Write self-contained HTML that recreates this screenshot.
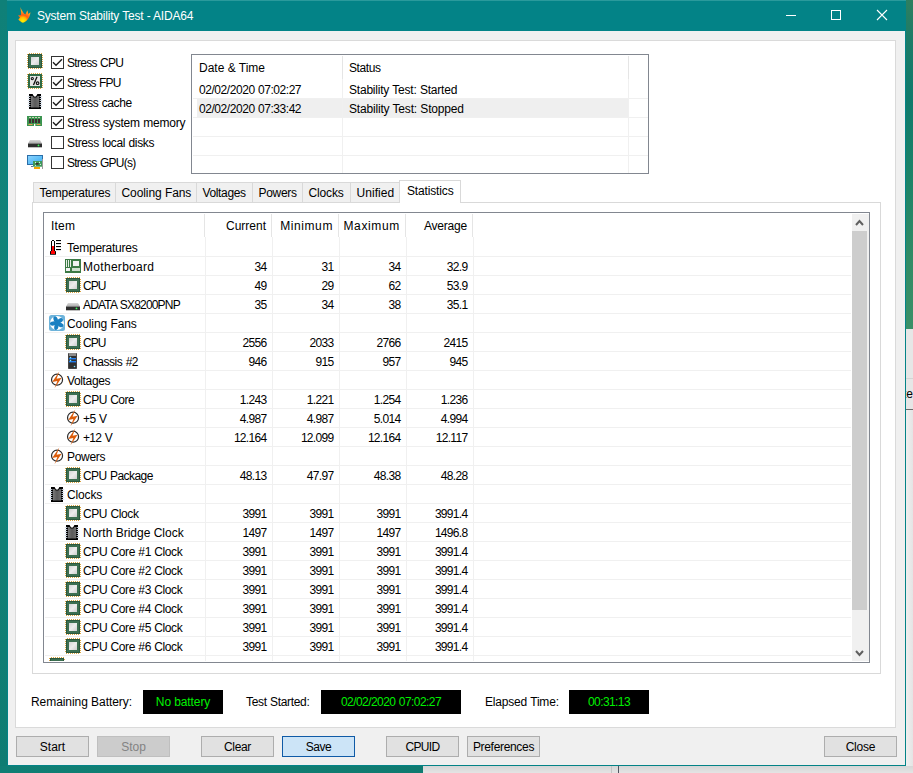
<!DOCTYPE html><html><head><meta charset="utf-8"><style>
*{margin:0;padding:0;box-sizing:border-box}
html,body{width:913px;height:773px;overflow:hidden}
body{position:relative;font-family:"Liberation Sans", sans-serif;font-size:12px;color:#000;
background:linear-gradient(180deg,#2f8c74 0%,#2a8a70 40%,#1f8470 100%)}
.a{position:absolute}
.ic{position:absolute;overflow:visible}
.t{position:absolute;white-space:nowrap;line-height:14px;letter-spacing:-0.3px}
.r{position:absolute;white-space:nowrap;line-height:14px;letter-spacing:-0.3px;text-align:right}
.cb{position:absolute;width:13px;height:13px;border:1px solid #333;background:#fff}
.btn{position:absolute;height:21px;width:73px;background:#e1e1e1;border:1px solid #adadad;text-align:center;line-height:21px;letter-spacing:-0.3px}
.blk{position:absolute;background:#000;color:#00f000;text-align:center;height:24px;line-height:24px;letter-spacing:-0.3px}
</style></head><body>
<svg width="0" height="0" style="position:absolute"><defs>
<linearGradient id="gcpu" x1="0" y1="0" x2="1" y2="1"><stop offset="0" stop-color="#d4d4d4"/><stop offset="0.5" stop-color="#ececec"/><stop offset="1" stop-color="#cfcfcf"/></linearGradient>
<linearGradient id="gchip" x1="0" y1="0" x2="1" y2="0"><stop offset="0" stop-color="#7a7a7a"/><stop offset="0.5" stop-color="#5a5a5a"/><stop offset="1" stop-color="#6e6e6e"/></linearGradient>
</defs></svg>

<div class="a" style="left:0;top:0;width:7px;height:773px;background:linear-gradient(180deg,#0f8078 0%,#128479 40%,#0e7c72 100%)"></div>
<div class="a" style="left:0;top:766px;width:423px;height:7px;background:linear-gradient(90deg,#0f7e74,#127f72 50%,#0f7a70)"></div>
<div class="a" style="left:906px;top:0;width:7px;height:329px;background:linear-gradient(180deg,#2e7f60 0%,#1c7c68 12%,#0f7a6c 30%,#1d8468 55%,#328c66 80%,#3a9068 100%)"></div>
<div class="a" style="left:906px;top:329px;width:7px;height:444px;background:linear-gradient(90deg,#f0f0f0,#e4e4e4)"></div>
<div class="a" style="left:906px;top:329px;width:7px;height:80px;background:#e6e6e6"></div>
<div class="a" style="left:906px;top:378px;width:7px;height:1px;background:#d4d4d4"></div>
<div class="a" style="left:906px;top:409px;width:7px;height:1px;background:#6a6a6a"></div>
<div class="a" style="left:906px;top:380px;width:7px;height:25px;overflow:hidden"><div class="t" style="left:-3px;top:7px;letter-spacing:0">te</div></div>
<div class="a" style="left:423px;top:766px;width:490px;height:7px;background:linear-gradient(180deg,#d6d6d6,#e4e4e4)"></div>
<div class="a" style="left:611px;top:766px;width:1px;height:7px;background:#c4c4c4"></div>
<div class="a" style="left:618px;top:766px;width:1px;height:7px;background:#505560"></div>
<div class="a" style="left:7px;top:0;width:899px;height:766px;background:#038387"></div>
<div class="a" style="left:7px;top:0;width:899px;height:1px;background:#2a9a9c"></div>
<div class="a" style="left:8px;top:31px;width:897px;height:734px;background:#f0f0f0"></div>
<svg class="ic" style="left:15px;top:4px" width="20" height="22" viewBox="0 0 20 22"><defs><radialGradient id="gfl" cx="7.8" cy="17" r="10" gradientUnits="userSpaceOnUse"><stop offset="0" stop-color="#fff200"/><stop offset="0.35" stop-color="#ffc000"/><stop offset="0.6" stop-color="#ff5a14"/><stop offset="1" stop-color="#ffa020"/></radialGradient></defs><path d="M5.3 3 C6 5 8 8 9 9.5 L10.3 10.5 L12.4 6.2 L13.3 10 L15.5 8.2 C15 11 14.5 13 13 15 C11 17.5 9 18.8 7.8 18.8 C6 18 4.5 16.5 3.3 15.4 L5 13.6 L3 11.4 L6 11 C6.5 8 5.5 5 5.3 3 Z" fill="url(#gfl)"/></svg>
<div class="t" style="left:37px;top:9px;letter-spacing:-0.220px;word-spacing:0.220px;color:#fff;font-size:12px">System Stability Test - AIDA64</div>
<div class="a" style="left:786px;top:15px;width:10px;height:1px;background:#fff"></div>
<div class="a" style="left:831px;top:10px;width:10px;height:10px;border:1px solid #fff"></div>
<svg class="ic" style="left:876px;top:9px" width="12" height="12" viewBox="0 0 12 12"><path d="M1 1 L11 11 M11 1 L1 11" stroke="#fff" stroke-width="1.1"/></svg>
<div class="a" style="left:15px;top:40px;width:881px;height:688px;background:#fff;border:1px solid #dadada"></div>
<svg class="ic" style="left:27px;top:53px" width="16" height="16" viewBox="0 0 16 16"><g fill="#d9a441"><rect x="2" y="0" width="1" height="1"/><rect x="1" y="15" width="1" height="1"/><rect x="0" y="1" width="1" height="1"/><rect x="15" y="2" width="1" height="1"/><rect x="4" y="0" width="1" height="1"/><rect x="3" y="15" width="1" height="1"/><rect x="0" y="3" width="1" height="1"/><rect x="15" y="4" width="1" height="1"/><rect x="6" y="0" width="1" height="1"/><rect x="5" y="15" width="1" height="1"/><rect x="0" y="5" width="1" height="1"/><rect x="15" y="6" width="1" height="1"/><rect x="8" y="0" width="1" height="1"/><rect x="7" y="15" width="1" height="1"/><rect x="0" y="7" width="1" height="1"/><rect x="15" y="8" width="1" height="1"/><rect x="10" y="0" width="1" height="1"/><rect x="9" y="15" width="1" height="1"/><rect x="0" y="9" width="1" height="1"/><rect x="15" y="10" width="1" height="1"/><rect x="12" y="0" width="1" height="1"/><rect x="11" y="15" width="1" height="1"/><rect x="0" y="11" width="1" height="1"/><rect x="15" y="12" width="1" height="1"/><rect x="14" y="0" width="1" height="1"/><rect x="13" y="15" width="1" height="1"/><rect x="0" y="13" width="1" height="1"/><rect x="15" y="14" width="1" height="1"/></g><rect x="1" y="1" width="14" height="14" fill="#3c6f51"/><rect x="1.5" y="1.5" width="13" height="13" fill="none" stroke="#2a573d" stroke-width="1"/><rect x="4" y="4" width="8" height="8" fill="url(#gcpu)"/></svg>
<div class="cb" style="left:51px;top:56px"></div>
<svg class="ic" style="left:51px;top:56px" width="13" height="13" viewBox="0 0 13 13"><path d="M2 6.3 L5 9.2 L11 3.2" fill="none" stroke="#1a1a1a" stroke-width="1.35"/></svg>
<div class="t" style="left:67px;top:56px;letter-spacing:-0.709px;word-spacing:0.709px;">Stress CPU</div>
<svg class="ic" style="left:27px;top:73px" width="16" height="16" viewBox="0 0 16 16"><g fill="#d9a441"><rect x="2" y="0" width="1" height="1"/><rect x="1" y="15" width="1" height="1"/><rect x="0" y="1" width="1" height="1"/><rect x="15" y="2" width="1" height="1"/><rect x="4" y="0" width="1" height="1"/><rect x="3" y="15" width="1" height="1"/><rect x="0" y="3" width="1" height="1"/><rect x="15" y="4" width="1" height="1"/><rect x="6" y="0" width="1" height="1"/><rect x="5" y="15" width="1" height="1"/><rect x="0" y="5" width="1" height="1"/><rect x="15" y="6" width="1" height="1"/><rect x="8" y="0" width="1" height="1"/><rect x="7" y="15" width="1" height="1"/><rect x="0" y="7" width="1" height="1"/><rect x="15" y="8" width="1" height="1"/><rect x="10" y="0" width="1" height="1"/><rect x="9" y="15" width="1" height="1"/><rect x="0" y="9" width="1" height="1"/><rect x="15" y="10" width="1" height="1"/><rect x="12" y="0" width="1" height="1"/><rect x="11" y="15" width="1" height="1"/><rect x="0" y="11" width="1" height="1"/><rect x="15" y="12" width="1" height="1"/><rect x="14" y="0" width="1" height="1"/><rect x="13" y="15" width="1" height="1"/><rect x="0" y="13" width="1" height="1"/><rect x="15" y="14" width="1" height="1"/></g><rect x="1" y="1" width="14" height="14" fill="#2f6a45"/><rect x="3" y="3" width="10" height="10" fill="#e6e6e6"/><circle cx="5.3" cy="5.6" r="1.1" fill="none" stroke="#111" stroke-width="1.1"/><circle cx="10.6" cy="10.2" r="1.3" fill="none" stroke="#111" stroke-width="1.1"/><path d="M10 3.8 L6.5 12" stroke="#111" stroke-width="1.3"/></svg>
<div class="cb" style="left:51px;top:76px"></div>
<svg class="ic" style="left:51px;top:76px" width="13" height="13" viewBox="0 0 13 13"><path d="M2 6.3 L5 9.2 L11 3.2" fill="none" stroke="#1a1a1a" stroke-width="1.35"/></svg>
<div class="t" style="left:67px;top:76px;letter-spacing:-0.878px;word-spacing:0.878px;">Stress FPU</div>
<svg class="ic" style="left:28px;top:93px" width="14" height="17" viewBox="0 0 14 17"><path d="M1 1 H4.6 L6 3.4 H8 L9.4 1 H13 V16 H1 Z" fill="#000"/><path d="M3 3 H4.6 L5.6 4.6 H8.4 L9.4 3 H11 V14.5 H3 Z" fill="url(#gchip)"/><g fill="#d2dce8"><rect x="-0.2" y="3.0" width="2.6" height="0.9"/><rect x="11.6" y="3.0" width="2.6" height="0.9"/><rect x="-0.2" y="5.0" width="2.6" height="0.9"/><rect x="11.6" y="5.0" width="2.6" height="0.9"/><rect x="-0.2" y="7.0" width="2.6" height="0.9"/><rect x="11.6" y="7.0" width="2.6" height="0.9"/><rect x="-0.2" y="9.0" width="2.6" height="0.9"/><rect x="11.6" y="9.0" width="2.6" height="0.9"/><rect x="-0.2" y="11.0" width="2.6" height="0.9"/><rect x="11.6" y="11.0" width="2.6" height="0.9"/><rect x="-0.2" y="13.0" width="2.6" height="0.9"/><rect x="11.6" y="13.0" width="2.6" height="0.9"/></g></svg>
<div class="cb" style="left:51px;top:96px"></div>
<svg class="ic" style="left:51px;top:96px" width="13" height="13" viewBox="0 0 13 13"><path d="M2 6.3 L5 9.2 L11 3.2" fill="none" stroke="#1a1a1a" stroke-width="1.35"/></svg>
<div class="t" style="left:67px;top:96px;letter-spacing:-0.429px;word-spacing:0.429px;">Stress cache</div>
<svg class="ic" style="left:25px;top:111px" width="20" height="20" viewBox="0 0 20 20"><rect x="2" y="5" width="15" height="10" fill="#3b9450"/><rect x="4" y="8" width="2" height="4" fill="#3e2c30"/><rect x="4" y="6" width="2" height="1" fill="#c9d6b4"/><rect x="7" y="8" width="2" height="4" fill="#3e2c30"/><rect x="7" y="6" width="2" height="1" fill="#c9d6b4"/><rect x="10" y="8" width="2" height="4" fill="#3e2c30"/><rect x="10" y="6" width="2" height="1" fill="#c9d6b4"/><rect x="13" y="8" width="2" height="4" fill="#3e2c30"/><rect x="13" y="6" width="2" height="1" fill="#c9d6b4"/><rect x="3.5" y="13" width="4" height="1" fill="#e8a050"/><rect x="11.5" y="13" width="4" height="1" fill="#e8a050"/><rect x="9" y="12.8" width="1.3" height="2.2" fill="#fff"/></svg>
<div class="cb" style="left:51px;top:116px"></div>
<svg class="ic" style="left:51px;top:116px" width="13" height="13" viewBox="0 0 13 13"><path d="M2 6.3 L5 9.2 L11 3.2" fill="none" stroke="#1a1a1a" stroke-width="1.35"/></svg>
<div class="t" style="left:67px;top:116px;letter-spacing:-0.212px;word-spacing:0.212px;">Stress system memory</div>
<svg class="ic" style="left:28px;top:140px" width="14" height="8" viewBox="0 0 14 8"><defs><linearGradient id="gdk28140" x1="0" y1="0" x2="0" y2="1"><stop offset="0" stop-color="#d8d8d8"/><stop offset="1" stop-color="#a8a8a8"/></linearGradient></defs><path d="M2 0 H12 L14 3.5 H0 Z" fill="url(#gdk28140)"/><rect x="0" y="3.5" width="14" height="3.8" fill="#2e2e2e"/><circle cx="10.5" cy="5.4" r="0.9" fill="#3cff5a"/></svg>
<div class="cb" style="left:51px;top:136px"></div>
<div class="t" style="left:67px;top:136px;letter-spacing:-0.351px;word-spacing:0.351px;">Stress local disks</div>
<svg class="ic" style="left:25px;top:151px" width="20" height="20" viewBox="0 0 20 20"><defs><linearGradient id="ggpu" x1="0" y1="0" x2="1" y2="1"><stop offset="0" stop-color="#8ad2ff"/><stop offset="1" stop-color="#38aef0"/></linearGradient></defs><rect x="2" y="4" width="16" height="10" fill="#2c6ea8"/><rect x="3" y="5" width="14" height="8" fill="url(#ggpu)"/><rect x="8" y="10" width="9" height="5.7" fill="#3e9a5a"/><rect x="11" y="12" width="2.6" height="1.6" fill="#3a2a2a"/><circle cx="10.5" cy="11.4" r="0.55" fill="#e8f0e8"/><circle cx="14.5" cy="11.4" r="0.55" fill="#e8f0e8"/><circle cx="15.4" cy="13.4" r="0.55" fill="#e8f0e8"/><circle cx="10.5" cy="14.5" r="0.55" fill="#e8f0e8"/><rect x="9" y="16" width="6" height="2" fill="#f5a800"/><rect x="17" y="8" width="1" height="10" fill="#9a9a9a"/><rect x="6" y="15.2" width="2" height="0.8" fill="#3a5a8a"/></svg>
<div class="cb" style="left:51px;top:156px"></div>
<div class="t" style="left:67px;top:156px;letter-spacing:-0.742px;word-spacing:0.742px;">Stress GPU(s)</div>
<div class="a" style="left:191px;top:54px;width:458px;height:120px;border:1px solid #828790;background:#fff"></div>
<div class="a" style="left:342px;top:56px;width:1px;height:23px;background:#e5e5e5"></div>
<div class="a" style="left:628px;top:56px;width:1px;height:23px;background:#e5e5e5"></div>
<div class="t" style="left:199px;top:61px;letter-spacing:0px;">Date &amp; Time</div>
<div class="t" style="left:349px;top:61px;letter-spacing:-0.38px;">Status</div>
<div class="a" style="left:193px;top:98px;width:455px;height:1px;background:#f0f0f0"></div>
<div class="a" style="left:193px;top:117px;width:455px;height:1px;background:#f0f0f0"></div>
<div class="a" style="left:193px;top:136px;width:455px;height:1px;background:#f0f0f0"></div>
<div class="a" style="left:193px;top:155px;width:455px;height:1px;background:#f0f0f0"></div>
<div class="a" style="left:197px;top:99px;width:431px;height:18px;background:#efefef"></div>
<div class="a" style="left:342px;top:79px;width:1px;height:94px;background:#f0f0f0"></div>
<div class="a" style="left:628px;top:79px;width:1px;height:94px;background:#f0f0f0"></div>
<div class="t" style="left:199px;top:83px;letter-spacing:-0.445px;word-spacing:0.445px;">02/02/2020 07:02:27</div>
<div class="t" style="left:349px;top:83px;letter-spacing:-0.209px;word-spacing:0.209px;">Stability Test: Started</div>
<div class="t" style="left:199px;top:102px;letter-spacing:-0.445px;word-spacing:0.445px;">02/02/2020 07:33:42</div>
<div class="t" style="left:349px;top:102px;letter-spacing:-0.176px;word-spacing:0.176px;">Stability Test: Stopped</div>
<div class="a" style="left:32px;top:202px;width:849px;height:472px;border:1px solid #d9d9d9;background:#fff"></div>
<div class="a" style="left:33px;top:182px;width:83px;height:21px;background:#f0f0f0;border:1px solid #d9d9d9"></div>
<div class="a" style="left:115px;top:182px;width:82px;height:21px;background:#f0f0f0;border:1px solid #d9d9d9"></div>
<div class="a" style="left:196px;top:182px;width:57px;height:21px;background:#f0f0f0;border:1px solid #d9d9d9"></div>
<div class="a" style="left:252px;top:182px;width:51px;height:21px;background:#f0f0f0;border:1px solid #d9d9d9"></div>
<div class="a" style="left:302px;top:182px;width:49px;height:21px;background:#f0f0f0;border:1px solid #d9d9d9"></div>
<div class="a" style="left:350px;top:182px;width:50px;height:21px;background:#f0f0f0;border:1px solid #d9d9d9"></div>
<div class="t" style="left:39.5px;top:186px;letter-spacing:-0.22px;">Temperatures</div>
<div class="t" style="left:121.5px;top:186px;letter-spacing:-0.088px;word-spacing:0.088px;">Cooling Fans</div>
<div class="t" style="left:202.5px;top:186px;letter-spacing:-0.36px;">Voltages</div>
<div class="t" style="left:258.5px;top:186px;letter-spacing:-0.32px;">Powers</div>
<div class="t" style="left:308.5px;top:186px;letter-spacing:-0.13px;">Clocks</div>
<div class="t" style="left:356.5px;top:186px;letter-spacing:0.05px;">Unified</div>
<div class="a" style="left:399px;top:180px;width:62px;height:23px;background:#fff;border:1px solid #d9d9d9;border-bottom:none"></div>
<div class="t" style="left:407px;top:184px;letter-spacing:-0.15px;">Statistics</div>
<div class="a" style="left:43px;top:212px;width:827px;height:451px;border:1px solid #828790;background:#fff"></div>
<div class="a" style="left:204px;top:214px;width:1px;height:23px;background:#e5e5e5"></div>
<div class="a" style="left:271px;top:214px;width:1px;height:23px;background:#e5e5e5"></div>
<div class="a" style="left:338px;top:214px;width:1px;height:23px;background:#e5e5e5"></div>
<div class="a" style="left:405px;top:214px;width:1px;height:23px;background:#e5e5e5"></div>
<div class="a" style="left:472px;top:214px;width:1px;height:23px;background:#e5e5e5"></div>
<div class="t" style="left:51px;top:219px;letter-spacing:0.2px;">Item</div>
<div class="r" style="left:204px;top:219px;width:62px;letter-spacing:0px">Current</div>
<div class="r" style="left:271px;top:219px;width:62px;letter-spacing:0.6px">Minimum</div>
<div class="r" style="left:338px;top:219px;width:62px;letter-spacing:0.65px">Maximum</div>
<div class="r" style="left:405px;top:219px;width:62px;letter-spacing:-0.2px">Average</div>
<div class="a" style="left:45px;top:256px;width:806px;height:1px;background:#f0f0f0"></div>
<div class="a" style="left:45px;top:275px;width:806px;height:1px;background:#f0f0f0"></div>
<div class="a" style="left:45px;top:294px;width:806px;height:1px;background:#f0f0f0"></div>
<div class="a" style="left:45px;top:313px;width:806px;height:1px;background:#f0f0f0"></div>
<div class="a" style="left:45px;top:332px;width:806px;height:1px;background:#f0f0f0"></div>
<div class="a" style="left:45px;top:351px;width:806px;height:1px;background:#f0f0f0"></div>
<div class="a" style="left:45px;top:370px;width:806px;height:1px;background:#f0f0f0"></div>
<div class="a" style="left:45px;top:389px;width:806px;height:1px;background:#f0f0f0"></div>
<div class="a" style="left:45px;top:408px;width:806px;height:1px;background:#f0f0f0"></div>
<div class="a" style="left:45px;top:427px;width:806px;height:1px;background:#f0f0f0"></div>
<div class="a" style="left:45px;top:446px;width:806px;height:1px;background:#f0f0f0"></div>
<div class="a" style="left:45px;top:465px;width:806px;height:1px;background:#f0f0f0"></div>
<div class="a" style="left:45px;top:484px;width:806px;height:1px;background:#f0f0f0"></div>
<div class="a" style="left:45px;top:503px;width:806px;height:1px;background:#f0f0f0"></div>
<div class="a" style="left:45px;top:522px;width:806px;height:1px;background:#f0f0f0"></div>
<div class="a" style="left:45px;top:541px;width:806px;height:1px;background:#f0f0f0"></div>
<div class="a" style="left:45px;top:560px;width:806px;height:1px;background:#f0f0f0"></div>
<div class="a" style="left:45px;top:579px;width:806px;height:1px;background:#f0f0f0"></div>
<div class="a" style="left:45px;top:598px;width:806px;height:1px;background:#f0f0f0"></div>
<div class="a" style="left:45px;top:617px;width:806px;height:1px;background:#f0f0f0"></div>
<div class="a" style="left:45px;top:636px;width:806px;height:1px;background:#f0f0f0"></div>
<div class="a" style="left:45px;top:655px;width:806px;height:1px;background:#f0f0f0"></div>
<div class="a" style="left:205px;top:237px;width:1px;height:424px;background:#f0f0f0"></div>
<div class="a" style="left:272px;top:237px;width:1px;height:424px;background:#f0f0f0"></div>
<div class="a" style="left:339px;top:237px;width:1px;height:424px;background:#f0f0f0"></div>
<div class="a" style="left:406px;top:237px;width:1px;height:424px;background:#f0f0f0"></div>
<div class="a" style="left:473px;top:237px;width:1px;height:424px;background:#f0f0f0"></div>
<svg class="ic" style="left:47px;top:237px" width="18" height="20" viewBox="0 0 18 20"><rect x="4" y="4" width="4" height="11" fill="#000"/><rect x="5" y="3" width="2" height="1" fill="#000"/><rect x="5" y="4" width="2" height="5" fill="#fff"/><rect x="5" y="9" width="2" height="6" fill="#f00"/><rect x="3" y="14" width="6" height="3.8" rx="0.6" fill="#000"/><rect x="4" y="14" width="4" height="3" fill="#f00"/><rect x="9" y="3" width="5" height="1.1" fill="#000"/><rect x="9" y="6" width="5" height="1.1" fill="#000"/><rect x="9" y="9" width="5" height="1.1" fill="#000"/><rect x="9" y="12" width="5" height="1.1" fill="#000"/></svg>
<div class="t" style="left:67px;top:241px;letter-spacing:-0.24px;">Temperatures</div>
<svg class="ic" style="left:65px;top:259px" width="16" height="14" viewBox="0 0 16 14"><rect x="0" y="0" width="16" height="14" fill="#3c7a45"/><rect x="1" y="1" width="1" height="7" fill="#e8efe8"/><rect x="3" y="1" width="1" height="7" fill="#e8efe8"/><rect x="5" y="1" width="1" height="7" fill="#e8efe8"/><rect x="8" y="2" width="6" height="5" fill="#f2f2f2"/><rect x="1" y="9" width="4" height="3" fill="#f2f2f2"/><rect x="7" y="9" width="8" height="3" fill="#cfe0cf"/></svg>
<div class="t" style="left:83px;top:260px;letter-spacing:0.3px;">Motherboard</div>
<div class="r" style="left:204px;top:260px;width:62.4px;letter-spacing:-0.7px">34</div>
<div class="r" style="left:271px;top:260px;width:62.4px;letter-spacing:-0.7px">31</div>
<div class="r" style="left:338px;top:260px;width:62.4px;letter-spacing:-0.7px">34</div>
<div class="r" style="left:405px;top:260px;width:62.4px;letter-spacing:-0.7px">32.9</div>
<svg class="ic" style="left:65px;top:277px" width="16" height="16" viewBox="0 0 16 16"><g fill="#d9a441"><rect x="2" y="0" width="1" height="1"/><rect x="1" y="15" width="1" height="1"/><rect x="0" y="1" width="1" height="1"/><rect x="15" y="2" width="1" height="1"/><rect x="4" y="0" width="1" height="1"/><rect x="3" y="15" width="1" height="1"/><rect x="0" y="3" width="1" height="1"/><rect x="15" y="4" width="1" height="1"/><rect x="6" y="0" width="1" height="1"/><rect x="5" y="15" width="1" height="1"/><rect x="0" y="5" width="1" height="1"/><rect x="15" y="6" width="1" height="1"/><rect x="8" y="0" width="1" height="1"/><rect x="7" y="15" width="1" height="1"/><rect x="0" y="7" width="1" height="1"/><rect x="15" y="8" width="1" height="1"/><rect x="10" y="0" width="1" height="1"/><rect x="9" y="15" width="1" height="1"/><rect x="0" y="9" width="1" height="1"/><rect x="15" y="10" width="1" height="1"/><rect x="12" y="0" width="1" height="1"/><rect x="11" y="15" width="1" height="1"/><rect x="0" y="11" width="1" height="1"/><rect x="15" y="12" width="1" height="1"/><rect x="14" y="0" width="1" height="1"/><rect x="13" y="15" width="1" height="1"/><rect x="0" y="13" width="1" height="1"/><rect x="15" y="14" width="1" height="1"/></g><rect x="1" y="1" width="14" height="14" fill="#3c6f51"/><rect x="1.5" y="1.5" width="13" height="13" fill="none" stroke="#2a573d" stroke-width="1"/><rect x="4" y="4" width="8" height="8" fill="url(#gcpu)"/></svg>
<div class="t" style="left:83px;top:279px;letter-spacing:-0.9px;">CPU</div>
<div class="r" style="left:204px;top:279px;width:62.4px;letter-spacing:-0.7px">49</div>
<div class="r" style="left:271px;top:279px;width:62.4px;letter-spacing:-0.7px">29</div>
<div class="r" style="left:338px;top:279px;width:62.4px;letter-spacing:-0.7px">62</div>
<div class="r" style="left:405px;top:279px;width:62.4px;letter-spacing:-0.7px">53.9</div>
<svg class="ic" style="left:66px;top:303px" width="14" height="8" viewBox="0 0 14 8"><defs><linearGradient id="gdk66303" x1="0" y1="0" x2="0" y2="1"><stop offset="0" stop-color="#d8d8d8"/><stop offset="1" stop-color="#a8a8a8"/></linearGradient></defs><path d="M2 0 H12 L14 3.5 H0 Z" fill="url(#gdk66303)"/><rect x="0" y="3.5" width="14" height="3.8" fill="#2e2e2e"/><circle cx="10.5" cy="5.4" r="0.9" fill="#3cff5a"/></svg>
<div class="t" style="left:83px;top:298px;letter-spacing:-0.818px;word-spacing:0.818px;">ADATA SX8200PNP</div>
<div class="r" style="left:204px;top:298px;width:62.4px;letter-spacing:-0.7px">35</div>
<div class="r" style="left:271px;top:298px;width:62.4px;letter-spacing:-0.7px">34</div>
<div class="r" style="left:338px;top:298px;width:62.4px;letter-spacing:-0.7px">38</div>
<div class="r" style="left:405px;top:298px;width:62.4px;letter-spacing:-0.7px">35.1</div>
<svg class="ic" style="left:49px;top:315px" width="16" height="16" viewBox="0 0 16 16"><rect x="0" y="0" width="16" height="16" rx="2.5" fill="#6db3da"/><circle cx="8" cy="8" r="7" fill="#ffffff"/><g fill="#1a80c2"><ellipse cx="8" cy="4.2" rx="2.1" ry="3.3" transform="rotate(-20 8 8)"/><ellipse cx="8" cy="4.2" rx="2.1" ry="3.3" transform="rotate(52 8 8)"/><ellipse cx="8" cy="4.2" rx="2.1" ry="3.3" transform="rotate(118 8 8)"/><ellipse cx="8" cy="4.2" rx="2.1" ry="3.3" transform="rotate(190 8 8)"/><ellipse cx="8" cy="4.2" rx="2.1" ry="3.3" transform="rotate(262 8 8)"/></g><circle cx="8" cy="8" r="2.4" fill="#1a80c2"/></svg>
<div class="t" style="left:67px;top:317px;letter-spacing:-0.088px;word-spacing:0.088px;">Cooling Fans</div>
<svg class="ic" style="left:65px;top:334px" width="16" height="16" viewBox="0 0 16 16"><g fill="#d9a441"><rect x="2" y="0" width="1" height="1"/><rect x="1" y="15" width="1" height="1"/><rect x="0" y="1" width="1" height="1"/><rect x="15" y="2" width="1" height="1"/><rect x="4" y="0" width="1" height="1"/><rect x="3" y="15" width="1" height="1"/><rect x="0" y="3" width="1" height="1"/><rect x="15" y="4" width="1" height="1"/><rect x="6" y="0" width="1" height="1"/><rect x="5" y="15" width="1" height="1"/><rect x="0" y="5" width="1" height="1"/><rect x="15" y="6" width="1" height="1"/><rect x="8" y="0" width="1" height="1"/><rect x="7" y="15" width="1" height="1"/><rect x="0" y="7" width="1" height="1"/><rect x="15" y="8" width="1" height="1"/><rect x="10" y="0" width="1" height="1"/><rect x="9" y="15" width="1" height="1"/><rect x="0" y="9" width="1" height="1"/><rect x="15" y="10" width="1" height="1"/><rect x="12" y="0" width="1" height="1"/><rect x="11" y="15" width="1" height="1"/><rect x="0" y="11" width="1" height="1"/><rect x="15" y="12" width="1" height="1"/><rect x="14" y="0" width="1" height="1"/><rect x="13" y="15" width="1" height="1"/><rect x="0" y="13" width="1" height="1"/><rect x="15" y="14" width="1" height="1"/></g><rect x="1" y="1" width="14" height="14" fill="#3c6f51"/><rect x="1.5" y="1.5" width="13" height="13" fill="none" stroke="#2a573d" stroke-width="1"/><rect x="4" y="4" width="8" height="8" fill="url(#gcpu)"/></svg>
<div class="t" style="left:83px;top:336px;letter-spacing:-0.9px;">CPU</div>
<div class="r" style="left:204px;top:336px;width:62.4px;letter-spacing:-0.7px">2556</div>
<div class="r" style="left:271px;top:336px;width:62.4px;letter-spacing:-0.7px">2033</div>
<div class="r" style="left:338px;top:336px;width:62.4px;letter-spacing:-0.7px">2766</div>
<div class="r" style="left:405px;top:336px;width:62.4px;letter-spacing:-0.7px">2415</div>
<svg class="ic" style="left:68px;top:353px" width="9" height="16" viewBox="0 0 9 16"><rect x="0" y="0" width="9" height="16" rx="0.8" fill="#454545"/><rect x="1" y="0" width="7" height="3" fill="#8c8c8c"/><rect x="1" y="3" width="7" height="12" fill="#303030"/><rect x="1" y="5" width="7" height="1.4" fill="#1f7cf0"/><rect x="1" y="8" width="7" height="1.4" fill="#1f7cf0"/><circle cx="2.5" cy="4.6" r="0.8" fill="#7fe4ff"/><circle cx="2.5" cy="7.6" r="0.8" fill="#7fe4ff"/><circle cx="6.5" cy="13.5" r="0.8" fill="#7fe4ff"/></svg>
<div class="t" style="left:83px;top:355px;letter-spacing:-0.484px;word-spacing:0.484px;">Chassis #2</div>
<div class="r" style="left:204px;top:355px;width:62.4px;letter-spacing:-0.7px">946</div>
<div class="r" style="left:271px;top:355px;width:62.4px;letter-spacing:-0.7px">915</div>
<div class="r" style="left:338px;top:355px;width:62.4px;letter-spacing:-0.7px">957</div>
<div class="r" style="left:405px;top:355px;width:62.4px;letter-spacing:-0.7px">945</div>
<svg class="ic" style="left:48px;top:370px" width="18" height="20" viewBox="0 0 18 20"><circle cx="9.05" cy="9.7" r="5.5" fill="none" stroke="#2a2a2a" stroke-width="1.2"/><path d="M11.3 1.6 L4.2 12.1 L9.4 10.9 L6.5 18.3 L13.6 7.7 L8.6 8.8 Z" fill="#dc5c0a"/></svg>
<div class="t" style="left:67px;top:374px;letter-spacing:-0.36px;">Voltages</div>
<svg class="ic" style="left:65px;top:391px" width="16" height="16" viewBox="0 0 16 16"><g fill="#d9a441"><rect x="2" y="0" width="1" height="1"/><rect x="1" y="15" width="1" height="1"/><rect x="0" y="1" width="1" height="1"/><rect x="15" y="2" width="1" height="1"/><rect x="4" y="0" width="1" height="1"/><rect x="3" y="15" width="1" height="1"/><rect x="0" y="3" width="1" height="1"/><rect x="15" y="4" width="1" height="1"/><rect x="6" y="0" width="1" height="1"/><rect x="5" y="15" width="1" height="1"/><rect x="0" y="5" width="1" height="1"/><rect x="15" y="6" width="1" height="1"/><rect x="8" y="0" width="1" height="1"/><rect x="7" y="15" width="1" height="1"/><rect x="0" y="7" width="1" height="1"/><rect x="15" y="8" width="1" height="1"/><rect x="10" y="0" width="1" height="1"/><rect x="9" y="15" width="1" height="1"/><rect x="0" y="9" width="1" height="1"/><rect x="15" y="10" width="1" height="1"/><rect x="12" y="0" width="1" height="1"/><rect x="11" y="15" width="1" height="1"/><rect x="0" y="11" width="1" height="1"/><rect x="15" y="12" width="1" height="1"/><rect x="14" y="0" width="1" height="1"/><rect x="13" y="15" width="1" height="1"/><rect x="0" y="13" width="1" height="1"/><rect x="15" y="14" width="1" height="1"/></g><rect x="1" y="1" width="14" height="14" fill="#3c6f51"/><rect x="1.5" y="1.5" width="13" height="13" fill="none" stroke="#2a573d" stroke-width="1"/><rect x="4" y="4" width="8" height="8" fill="url(#gcpu)"/></svg>
<div class="t" style="left:83px;top:393px;letter-spacing:-0.502px;word-spacing:0.502px;">CPU Core</div>
<div class="r" style="left:204px;top:393px;width:62.4px;letter-spacing:-0.7px">1.243</div>
<div class="r" style="left:271px;top:393px;width:62.4px;letter-spacing:-0.7px">1.221</div>
<div class="r" style="left:338px;top:393px;width:62.4px;letter-spacing:-0.7px">1.254</div>
<div class="r" style="left:405px;top:393px;width:62.4px;letter-spacing:-0.7px">1.236</div>
<svg class="ic" style="left:64px;top:408px" width="18" height="20" viewBox="0 0 18 20"><circle cx="9.05" cy="9.7" r="5.5" fill="none" stroke="#2a2a2a" stroke-width="1.2"/><path d="M11.3 1.6 L4.2 12.1 L9.4 10.9 L6.5 18.3 L13.6 7.7 L8.6 8.8 Z" fill="#dc5c0a"/></svg>
<div class="t" style="left:83px;top:412px;letter-spacing:-0.495px;word-spacing:0.495px;">+5 V</div>
<div class="r" style="left:204px;top:412px;width:62.4px;letter-spacing:-0.7px">4.987</div>
<div class="r" style="left:271px;top:412px;width:62.4px;letter-spacing:-0.7px">4.987</div>
<div class="r" style="left:338px;top:412px;width:62.4px;letter-spacing:-0.7px">5.014</div>
<div class="r" style="left:405px;top:412px;width:62.4px;letter-spacing:-0.7px">4.994</div>
<svg class="ic" style="left:64px;top:427px" width="18" height="20" viewBox="0 0 18 20"><circle cx="9.05" cy="9.7" r="5.5" fill="none" stroke="#2a2a2a" stroke-width="1.2"/><path d="M11.3 1.6 L4.2 12.1 L9.4 10.9 L6.5 18.3 L13.6 7.7 L8.6 8.8 Z" fill="#dc5c0a"/></svg>
<div class="t" style="left:83px;top:431px;letter-spacing:-0.667px;word-spacing:0.667px;">+12 V</div>
<div class="r" style="left:204px;top:431px;width:62.4px;letter-spacing:-0.7px">12.164</div>
<div class="r" style="left:271px;top:431px;width:62.4px;letter-spacing:-0.7px">12.099</div>
<div class="r" style="left:338px;top:431px;width:62.4px;letter-spacing:-0.7px">12.164</div>
<div class="r" style="left:405px;top:431px;width:62.4px;letter-spacing:-0.7px">12.117</div>
<svg class="ic" style="left:48px;top:446px" width="18" height="20" viewBox="0 0 18 20"><circle cx="9.05" cy="9.7" r="5.5" fill="none" stroke="#2a2a2a" stroke-width="1.2"/><path d="M11.3 1.6 L4.2 12.1 L9.4 10.9 L6.5 18.3 L13.6 7.7 L8.6 8.8 Z" fill="#dc5c0a"/></svg>
<div class="t" style="left:67px;top:450px;letter-spacing:-0.32px;">Powers</div>
<svg class="ic" style="left:65px;top:467px" width="16" height="16" viewBox="0 0 16 16"><g fill="#d9a441"><rect x="2" y="0" width="1" height="1"/><rect x="1" y="15" width="1" height="1"/><rect x="0" y="1" width="1" height="1"/><rect x="15" y="2" width="1" height="1"/><rect x="4" y="0" width="1" height="1"/><rect x="3" y="15" width="1" height="1"/><rect x="0" y="3" width="1" height="1"/><rect x="15" y="4" width="1" height="1"/><rect x="6" y="0" width="1" height="1"/><rect x="5" y="15" width="1" height="1"/><rect x="0" y="5" width="1" height="1"/><rect x="15" y="6" width="1" height="1"/><rect x="8" y="0" width="1" height="1"/><rect x="7" y="15" width="1" height="1"/><rect x="0" y="7" width="1" height="1"/><rect x="15" y="8" width="1" height="1"/><rect x="10" y="0" width="1" height="1"/><rect x="9" y="15" width="1" height="1"/><rect x="0" y="9" width="1" height="1"/><rect x="15" y="10" width="1" height="1"/><rect x="12" y="0" width="1" height="1"/><rect x="11" y="15" width="1" height="1"/><rect x="0" y="11" width="1" height="1"/><rect x="15" y="12" width="1" height="1"/><rect x="14" y="0" width="1" height="1"/><rect x="13" y="15" width="1" height="1"/><rect x="0" y="13" width="1" height="1"/><rect x="15" y="14" width="1" height="1"/></g><rect x="1" y="1" width="14" height="14" fill="#3c6f51"/><rect x="1.5" y="1.5" width="13" height="13" fill="none" stroke="#2a573d" stroke-width="1"/><rect x="4" y="4" width="8" height="8" fill="url(#gcpu)"/></svg>
<div class="t" style="left:83px;top:469px;letter-spacing:-0.556px;word-spacing:0.556px;">CPU Package</div>
<div class="r" style="left:204px;top:469px;width:62.4px;letter-spacing:-0.7px">48.13</div>
<div class="r" style="left:271px;top:469px;width:62.4px;letter-spacing:-0.7px">47.97</div>
<div class="r" style="left:338px;top:469px;width:62.4px;letter-spacing:-0.7px">48.38</div>
<div class="r" style="left:405px;top:469px;width:62.4px;letter-spacing:-0.7px">48.28</div>
<svg class="ic" style="left:50px;top:486px" width="14" height="17" viewBox="0 0 14 17"><path d="M1 1 H4.6 L6 3.4 H8 L9.4 1 H13 V16 H1 Z" fill="#000"/><path d="M3 3 H4.6 L5.6 4.6 H8.4 L9.4 3 H11 V14.5 H3 Z" fill="url(#gchip)"/><g fill="#d2dce8"><rect x="-0.2" y="3.0" width="2.6" height="0.9"/><rect x="11.6" y="3.0" width="2.6" height="0.9"/><rect x="-0.2" y="5.0" width="2.6" height="0.9"/><rect x="11.6" y="5.0" width="2.6" height="0.9"/><rect x="-0.2" y="7.0" width="2.6" height="0.9"/><rect x="11.6" y="7.0" width="2.6" height="0.9"/><rect x="-0.2" y="9.0" width="2.6" height="0.9"/><rect x="11.6" y="9.0" width="2.6" height="0.9"/><rect x="-0.2" y="11.0" width="2.6" height="0.9"/><rect x="11.6" y="11.0" width="2.6" height="0.9"/><rect x="-0.2" y="13.0" width="2.6" height="0.9"/><rect x="11.6" y="13.0" width="2.6" height="0.9"/></g></svg>
<div class="t" style="left:67px;top:488px;letter-spacing:-0.13px;">Clocks</div>
<svg class="ic" style="left:65px;top:505px" width="16" height="16" viewBox="0 0 16 16"><g fill="#d9a441"><rect x="2" y="0" width="1" height="1"/><rect x="1" y="15" width="1" height="1"/><rect x="0" y="1" width="1" height="1"/><rect x="15" y="2" width="1" height="1"/><rect x="4" y="0" width="1" height="1"/><rect x="3" y="15" width="1" height="1"/><rect x="0" y="3" width="1" height="1"/><rect x="15" y="4" width="1" height="1"/><rect x="6" y="0" width="1" height="1"/><rect x="5" y="15" width="1" height="1"/><rect x="0" y="5" width="1" height="1"/><rect x="15" y="6" width="1" height="1"/><rect x="8" y="0" width="1" height="1"/><rect x="7" y="15" width="1" height="1"/><rect x="0" y="7" width="1" height="1"/><rect x="15" y="8" width="1" height="1"/><rect x="10" y="0" width="1" height="1"/><rect x="9" y="15" width="1" height="1"/><rect x="0" y="9" width="1" height="1"/><rect x="15" y="10" width="1" height="1"/><rect x="12" y="0" width="1" height="1"/><rect x="11" y="15" width="1" height="1"/><rect x="0" y="11" width="1" height="1"/><rect x="15" y="12" width="1" height="1"/><rect x="14" y="0" width="1" height="1"/><rect x="13" y="15" width="1" height="1"/><rect x="0" y="13" width="1" height="1"/><rect x="15" y="14" width="1" height="1"/></g><rect x="1" y="1" width="14" height="14" fill="#3c6f51"/><rect x="1.5" y="1.5" width="13" height="13" fill="none" stroke="#2a573d" stroke-width="1"/><rect x="4" y="4" width="8" height="8" fill="url(#gcpu)"/></svg>
<div class="t" style="left:83px;top:507px;letter-spacing:-0.400px;word-spacing:0.400px;">CPU Clock</div>
<div class="r" style="left:204px;top:507px;width:62.4px;letter-spacing:-0.7px">3991</div>
<div class="r" style="left:271px;top:507px;width:62.4px;letter-spacing:-0.7px">3991</div>
<div class="r" style="left:338px;top:507px;width:62.4px;letter-spacing:-0.7px">3991</div>
<div class="r" style="left:405px;top:507px;width:62.4px;letter-spacing:-0.7px">3991.4</div>
<svg class="ic" style="left:65px;top:524px" width="14" height="17" viewBox="0 0 14 17"><path d="M1 1 H4.6 L6 3.4 H8 L9.4 1 H13 V16 H1 Z" fill="#000"/><path d="M3 3 H4.6 L5.6 4.6 H8.4 L9.4 3 H11 V14.5 H3 Z" fill="url(#gchip)"/><g fill="#d2dce8"><rect x="-0.2" y="3.0" width="2.6" height="0.9"/><rect x="11.6" y="3.0" width="2.6" height="0.9"/><rect x="-0.2" y="5.0" width="2.6" height="0.9"/><rect x="11.6" y="5.0" width="2.6" height="0.9"/><rect x="-0.2" y="7.0" width="2.6" height="0.9"/><rect x="11.6" y="7.0" width="2.6" height="0.9"/><rect x="-0.2" y="9.0" width="2.6" height="0.9"/><rect x="11.6" y="9.0" width="2.6" height="0.9"/><rect x="-0.2" y="11.0" width="2.6" height="0.9"/><rect x="11.6" y="11.0" width="2.6" height="0.9"/><rect x="-0.2" y="13.0" width="2.6" height="0.9"/><rect x="11.6" y="13.0" width="2.6" height="0.9"/></g></svg>
<div class="t" style="left:83px;top:526px;letter-spacing:0px;">North Bridge Clock</div>
<div class="r" style="left:204px;top:526px;width:62.4px;letter-spacing:-0.7px">1497</div>
<div class="r" style="left:271px;top:526px;width:62.4px;letter-spacing:-0.7px">1497</div>
<div class="r" style="left:338px;top:526px;width:62.4px;letter-spacing:-0.7px">1497</div>
<div class="r" style="left:405px;top:526px;width:62.4px;letter-spacing:-0.7px">1496.8</div>
<svg class="ic" style="left:65px;top:543px" width="16" height="16" viewBox="0 0 16 16"><g fill="#d9a441"><rect x="2" y="0" width="1" height="1"/><rect x="1" y="15" width="1" height="1"/><rect x="0" y="1" width="1" height="1"/><rect x="15" y="2" width="1" height="1"/><rect x="4" y="0" width="1" height="1"/><rect x="3" y="15" width="1" height="1"/><rect x="0" y="3" width="1" height="1"/><rect x="15" y="4" width="1" height="1"/><rect x="6" y="0" width="1" height="1"/><rect x="5" y="15" width="1" height="1"/><rect x="0" y="5" width="1" height="1"/><rect x="15" y="6" width="1" height="1"/><rect x="8" y="0" width="1" height="1"/><rect x="7" y="15" width="1" height="1"/><rect x="0" y="7" width="1" height="1"/><rect x="15" y="8" width="1" height="1"/><rect x="10" y="0" width="1" height="1"/><rect x="9" y="15" width="1" height="1"/><rect x="0" y="9" width="1" height="1"/><rect x="15" y="10" width="1" height="1"/><rect x="12" y="0" width="1" height="1"/><rect x="11" y="15" width="1" height="1"/><rect x="0" y="11" width="1" height="1"/><rect x="15" y="12" width="1" height="1"/><rect x="14" y="0" width="1" height="1"/><rect x="13" y="15" width="1" height="1"/><rect x="0" y="13" width="1" height="1"/><rect x="15" y="14" width="1" height="1"/></g><rect x="1" y="1" width="14" height="14" fill="#3c6f51"/><rect x="1.5" y="1.5" width="13" height="13" fill="none" stroke="#2a573d" stroke-width="1"/><rect x="4" y="4" width="8" height="8" fill="url(#gcpu)"/></svg>
<div class="t" style="left:83px;top:545px;letter-spacing:-0.382px;word-spacing:0.382px;">CPU Core #1 Clock</div>
<div class="r" style="left:204px;top:545px;width:62.4px;letter-spacing:-0.7px">3991</div>
<div class="r" style="left:271px;top:545px;width:62.4px;letter-spacing:-0.7px">3991</div>
<div class="r" style="left:338px;top:545px;width:62.4px;letter-spacing:-0.7px">3991</div>
<div class="r" style="left:405px;top:545px;width:62.4px;letter-spacing:-0.7px">3991.4</div>
<svg class="ic" style="left:65px;top:562px" width="16" height="16" viewBox="0 0 16 16"><g fill="#d9a441"><rect x="2" y="0" width="1" height="1"/><rect x="1" y="15" width="1" height="1"/><rect x="0" y="1" width="1" height="1"/><rect x="15" y="2" width="1" height="1"/><rect x="4" y="0" width="1" height="1"/><rect x="3" y="15" width="1" height="1"/><rect x="0" y="3" width="1" height="1"/><rect x="15" y="4" width="1" height="1"/><rect x="6" y="0" width="1" height="1"/><rect x="5" y="15" width="1" height="1"/><rect x="0" y="5" width="1" height="1"/><rect x="15" y="6" width="1" height="1"/><rect x="8" y="0" width="1" height="1"/><rect x="7" y="15" width="1" height="1"/><rect x="0" y="7" width="1" height="1"/><rect x="15" y="8" width="1" height="1"/><rect x="10" y="0" width="1" height="1"/><rect x="9" y="15" width="1" height="1"/><rect x="0" y="9" width="1" height="1"/><rect x="15" y="10" width="1" height="1"/><rect x="12" y="0" width="1" height="1"/><rect x="11" y="15" width="1" height="1"/><rect x="0" y="11" width="1" height="1"/><rect x="15" y="12" width="1" height="1"/><rect x="14" y="0" width="1" height="1"/><rect x="13" y="15" width="1" height="1"/><rect x="0" y="13" width="1" height="1"/><rect x="15" y="14" width="1" height="1"/></g><rect x="1" y="1" width="14" height="14" fill="#3c6f51"/><rect x="1.5" y="1.5" width="13" height="13" fill="none" stroke="#2a573d" stroke-width="1"/><rect x="4" y="4" width="8" height="8" fill="url(#gcpu)"/></svg>
<div class="t" style="left:83px;top:564px;letter-spacing:-0.382px;word-spacing:0.382px;">CPU Core #2 Clock</div>
<div class="r" style="left:204px;top:564px;width:62.4px;letter-spacing:-0.7px">3991</div>
<div class="r" style="left:271px;top:564px;width:62.4px;letter-spacing:-0.7px">3991</div>
<div class="r" style="left:338px;top:564px;width:62.4px;letter-spacing:-0.7px">3991</div>
<div class="r" style="left:405px;top:564px;width:62.4px;letter-spacing:-0.7px">3991.4</div>
<svg class="ic" style="left:65px;top:581px" width="16" height="16" viewBox="0 0 16 16"><g fill="#d9a441"><rect x="2" y="0" width="1" height="1"/><rect x="1" y="15" width="1" height="1"/><rect x="0" y="1" width="1" height="1"/><rect x="15" y="2" width="1" height="1"/><rect x="4" y="0" width="1" height="1"/><rect x="3" y="15" width="1" height="1"/><rect x="0" y="3" width="1" height="1"/><rect x="15" y="4" width="1" height="1"/><rect x="6" y="0" width="1" height="1"/><rect x="5" y="15" width="1" height="1"/><rect x="0" y="5" width="1" height="1"/><rect x="15" y="6" width="1" height="1"/><rect x="8" y="0" width="1" height="1"/><rect x="7" y="15" width="1" height="1"/><rect x="0" y="7" width="1" height="1"/><rect x="15" y="8" width="1" height="1"/><rect x="10" y="0" width="1" height="1"/><rect x="9" y="15" width="1" height="1"/><rect x="0" y="9" width="1" height="1"/><rect x="15" y="10" width="1" height="1"/><rect x="12" y="0" width="1" height="1"/><rect x="11" y="15" width="1" height="1"/><rect x="0" y="11" width="1" height="1"/><rect x="15" y="12" width="1" height="1"/><rect x="14" y="0" width="1" height="1"/><rect x="13" y="15" width="1" height="1"/><rect x="0" y="13" width="1" height="1"/><rect x="15" y="14" width="1" height="1"/></g><rect x="1" y="1" width="14" height="14" fill="#3c6f51"/><rect x="1.5" y="1.5" width="13" height="13" fill="none" stroke="#2a573d" stroke-width="1"/><rect x="4" y="4" width="8" height="8" fill="url(#gcpu)"/></svg>
<div class="t" style="left:83px;top:583px;letter-spacing:-0.382px;word-spacing:0.382px;">CPU Core #3 Clock</div>
<div class="r" style="left:204px;top:583px;width:62.4px;letter-spacing:-0.7px">3991</div>
<div class="r" style="left:271px;top:583px;width:62.4px;letter-spacing:-0.7px">3991</div>
<div class="r" style="left:338px;top:583px;width:62.4px;letter-spacing:-0.7px">3991</div>
<div class="r" style="left:405px;top:583px;width:62.4px;letter-spacing:-0.7px">3991.4</div>
<svg class="ic" style="left:65px;top:600px" width="16" height="16" viewBox="0 0 16 16"><g fill="#d9a441"><rect x="2" y="0" width="1" height="1"/><rect x="1" y="15" width="1" height="1"/><rect x="0" y="1" width="1" height="1"/><rect x="15" y="2" width="1" height="1"/><rect x="4" y="0" width="1" height="1"/><rect x="3" y="15" width="1" height="1"/><rect x="0" y="3" width="1" height="1"/><rect x="15" y="4" width="1" height="1"/><rect x="6" y="0" width="1" height="1"/><rect x="5" y="15" width="1" height="1"/><rect x="0" y="5" width="1" height="1"/><rect x="15" y="6" width="1" height="1"/><rect x="8" y="0" width="1" height="1"/><rect x="7" y="15" width="1" height="1"/><rect x="0" y="7" width="1" height="1"/><rect x="15" y="8" width="1" height="1"/><rect x="10" y="0" width="1" height="1"/><rect x="9" y="15" width="1" height="1"/><rect x="0" y="9" width="1" height="1"/><rect x="15" y="10" width="1" height="1"/><rect x="12" y="0" width="1" height="1"/><rect x="11" y="15" width="1" height="1"/><rect x="0" y="11" width="1" height="1"/><rect x="15" y="12" width="1" height="1"/><rect x="14" y="0" width="1" height="1"/><rect x="13" y="15" width="1" height="1"/><rect x="0" y="13" width="1" height="1"/><rect x="15" y="14" width="1" height="1"/></g><rect x="1" y="1" width="14" height="14" fill="#3c6f51"/><rect x="1.5" y="1.5" width="13" height="13" fill="none" stroke="#2a573d" stroke-width="1"/><rect x="4" y="4" width="8" height="8" fill="url(#gcpu)"/></svg>
<div class="t" style="left:83px;top:602px;letter-spacing:-0.382px;word-spacing:0.382px;">CPU Core #4 Clock</div>
<div class="r" style="left:204px;top:602px;width:62.4px;letter-spacing:-0.7px">3991</div>
<div class="r" style="left:271px;top:602px;width:62.4px;letter-spacing:-0.7px">3991</div>
<div class="r" style="left:338px;top:602px;width:62.4px;letter-spacing:-0.7px">3991</div>
<div class="r" style="left:405px;top:602px;width:62.4px;letter-spacing:-0.7px">3991.4</div>
<svg class="ic" style="left:65px;top:619px" width="16" height="16" viewBox="0 0 16 16"><g fill="#d9a441"><rect x="2" y="0" width="1" height="1"/><rect x="1" y="15" width="1" height="1"/><rect x="0" y="1" width="1" height="1"/><rect x="15" y="2" width="1" height="1"/><rect x="4" y="0" width="1" height="1"/><rect x="3" y="15" width="1" height="1"/><rect x="0" y="3" width="1" height="1"/><rect x="15" y="4" width="1" height="1"/><rect x="6" y="0" width="1" height="1"/><rect x="5" y="15" width="1" height="1"/><rect x="0" y="5" width="1" height="1"/><rect x="15" y="6" width="1" height="1"/><rect x="8" y="0" width="1" height="1"/><rect x="7" y="15" width="1" height="1"/><rect x="0" y="7" width="1" height="1"/><rect x="15" y="8" width="1" height="1"/><rect x="10" y="0" width="1" height="1"/><rect x="9" y="15" width="1" height="1"/><rect x="0" y="9" width="1" height="1"/><rect x="15" y="10" width="1" height="1"/><rect x="12" y="0" width="1" height="1"/><rect x="11" y="15" width="1" height="1"/><rect x="0" y="11" width="1" height="1"/><rect x="15" y="12" width="1" height="1"/><rect x="14" y="0" width="1" height="1"/><rect x="13" y="15" width="1" height="1"/><rect x="0" y="13" width="1" height="1"/><rect x="15" y="14" width="1" height="1"/></g><rect x="1" y="1" width="14" height="14" fill="#3c6f51"/><rect x="1.5" y="1.5" width="13" height="13" fill="none" stroke="#2a573d" stroke-width="1"/><rect x="4" y="4" width="8" height="8" fill="url(#gcpu)"/></svg>
<div class="t" style="left:83px;top:621px;letter-spacing:-0.382px;word-spacing:0.382px;">CPU Core #5 Clock</div>
<div class="r" style="left:204px;top:621px;width:62.4px;letter-spacing:-0.7px">3991</div>
<div class="r" style="left:271px;top:621px;width:62.4px;letter-spacing:-0.7px">3991</div>
<div class="r" style="left:338px;top:621px;width:62.4px;letter-spacing:-0.7px">3991</div>
<div class="r" style="left:405px;top:621px;width:62.4px;letter-spacing:-0.7px">3991.4</div>
<svg class="ic" style="left:65px;top:638px" width="16" height="16" viewBox="0 0 16 16"><g fill="#d9a441"><rect x="2" y="0" width="1" height="1"/><rect x="1" y="15" width="1" height="1"/><rect x="0" y="1" width="1" height="1"/><rect x="15" y="2" width="1" height="1"/><rect x="4" y="0" width="1" height="1"/><rect x="3" y="15" width="1" height="1"/><rect x="0" y="3" width="1" height="1"/><rect x="15" y="4" width="1" height="1"/><rect x="6" y="0" width="1" height="1"/><rect x="5" y="15" width="1" height="1"/><rect x="0" y="5" width="1" height="1"/><rect x="15" y="6" width="1" height="1"/><rect x="8" y="0" width="1" height="1"/><rect x="7" y="15" width="1" height="1"/><rect x="0" y="7" width="1" height="1"/><rect x="15" y="8" width="1" height="1"/><rect x="10" y="0" width="1" height="1"/><rect x="9" y="15" width="1" height="1"/><rect x="0" y="9" width="1" height="1"/><rect x="15" y="10" width="1" height="1"/><rect x="12" y="0" width="1" height="1"/><rect x="11" y="15" width="1" height="1"/><rect x="0" y="11" width="1" height="1"/><rect x="15" y="12" width="1" height="1"/><rect x="14" y="0" width="1" height="1"/><rect x="13" y="15" width="1" height="1"/><rect x="0" y="13" width="1" height="1"/><rect x="15" y="14" width="1" height="1"/></g><rect x="1" y="1" width="14" height="14" fill="#3c6f51"/><rect x="1.5" y="1.5" width="13" height="13" fill="none" stroke="#2a573d" stroke-width="1"/><rect x="4" y="4" width="8" height="8" fill="url(#gcpu)"/></svg>
<div class="t" style="left:83px;top:640px;letter-spacing:-0.382px;word-spacing:0.382px;">CPU Core #6 Clock</div>
<div class="r" style="left:204px;top:640px;width:62.4px;letter-spacing:-0.7px">3991</div>
<div class="r" style="left:271px;top:640px;width:62.4px;letter-spacing:-0.7px">3991</div>
<div class="r" style="left:338px;top:640px;width:62.4px;letter-spacing:-0.7px">3991</div>
<div class="r" style="left:405px;top:640px;width:62.4px;letter-spacing:-0.7px">3991.4</div>
<div class="a" style="left:43px;top:655px;width:827px;height:6px;overflow:hidden"><svg class="ic" style="left:6px;top:2px" width="16" height="16" viewBox="0 0 16 16"><g fill="#d9a441"><rect x="2" y="0" width="1" height="1"/><rect x="1" y="15" width="1" height="1"/><rect x="0" y="1" width="1" height="1"/><rect x="15" y="2" width="1" height="1"/><rect x="4" y="0" width="1" height="1"/><rect x="3" y="15" width="1" height="1"/><rect x="0" y="3" width="1" height="1"/><rect x="15" y="4" width="1" height="1"/><rect x="6" y="0" width="1" height="1"/><rect x="5" y="15" width="1" height="1"/><rect x="0" y="5" width="1" height="1"/><rect x="15" y="6" width="1" height="1"/><rect x="8" y="0" width="1" height="1"/><rect x="7" y="15" width="1" height="1"/><rect x="0" y="7" width="1" height="1"/><rect x="15" y="8" width="1" height="1"/><rect x="10" y="0" width="1" height="1"/><rect x="9" y="15" width="1" height="1"/><rect x="0" y="9" width="1" height="1"/><rect x="15" y="10" width="1" height="1"/><rect x="12" y="0" width="1" height="1"/><rect x="11" y="15" width="1" height="1"/><rect x="0" y="11" width="1" height="1"/><rect x="15" y="12" width="1" height="1"/><rect x="14" y="0" width="1" height="1"/><rect x="13" y="15" width="1" height="1"/><rect x="0" y="13" width="1" height="1"/><rect x="15" y="14" width="1" height="1"/></g><rect x="1" y="1" width="14" height="14" fill="#3c6f51"/><rect x="1.5" y="1.5" width="13" height="13" fill="none" stroke="#2a573d" stroke-width="1"/><rect x="4" y="4" width="8" height="8" fill="url(#gcpu)"/></svg></div>
<div class="a" style="left:852px;top:214px;width:17px;height:447px;background:#f0f0f0"></div>
<div class="a" style="left:852px;top:231px;width:15px;height:379px;background:#cdcdcd"></div>
<svg class="ic" style="left:855px;top:219px" width="9" height="8" viewBox="0 0 9 8"><path d="M1 6 L4.5 2 L8 6" fill="none" stroke="#606060" stroke-width="2"/></svg>
<svg class="ic" style="left:855px;top:649px" width="9" height="8" viewBox="0 0 9 8"><path d="M1 2 L4.5 6 L8 2" fill="none" stroke="#606060" stroke-width="2"/></svg>
<div class="t" style="left:31px;top:695px;letter-spacing:-0.064px;word-spacing:0.064px;">Remaining Battery:</div>
<div class="blk" style="left:143px;top:690px;width:80px;letter-spacing:-0.1px">No battery</div>
<div class="t" style="left:246px;top:695px;letter-spacing:-0.327px;word-spacing:0.327px;">Test Started:</div>
<div class="blk" style="left:321px;top:690px;width:140px;letter-spacing:-0.56px;word-spacing:0.56px">02/02/2020 07:02:27</div>
<div class="t" style="left:485px;top:695px;letter-spacing:-0.185px;word-spacing:0.185px;">Elapsed Time:</div>
<div class="blk" style="left:569px;top:690px;width:80px;letter-spacing:-0.59px">00:31:13</div>
<div class="btn" style="left:16px;top:736px;letter-spacing:0px;">Start</div>
<div class="btn" style="left:97px;top:736px;letter-spacing:0px;background:#cccccc;border-color:#bfbfbf;color:#838383">Stop</div>
<div class="btn" style="left:201px;top:736px;letter-spacing:-0.35px;">Clear</div>
<div class="btn" style="left:282px;top:736px;letter-spacing:-0.5px;background:#cce4f7;border-color:#0f5aa6">Save</div>
<div class="btn" style="left:386px;top:736px;letter-spacing:-0.68px;">CPUID</div>
<div class="btn" style="left:467px;top:736px;letter-spacing:-0.32px;">Preferences</div>
<div class="btn" style="left:824px;top:736px;letter-spacing:-0.2px;">Close</div>
</body></html>
